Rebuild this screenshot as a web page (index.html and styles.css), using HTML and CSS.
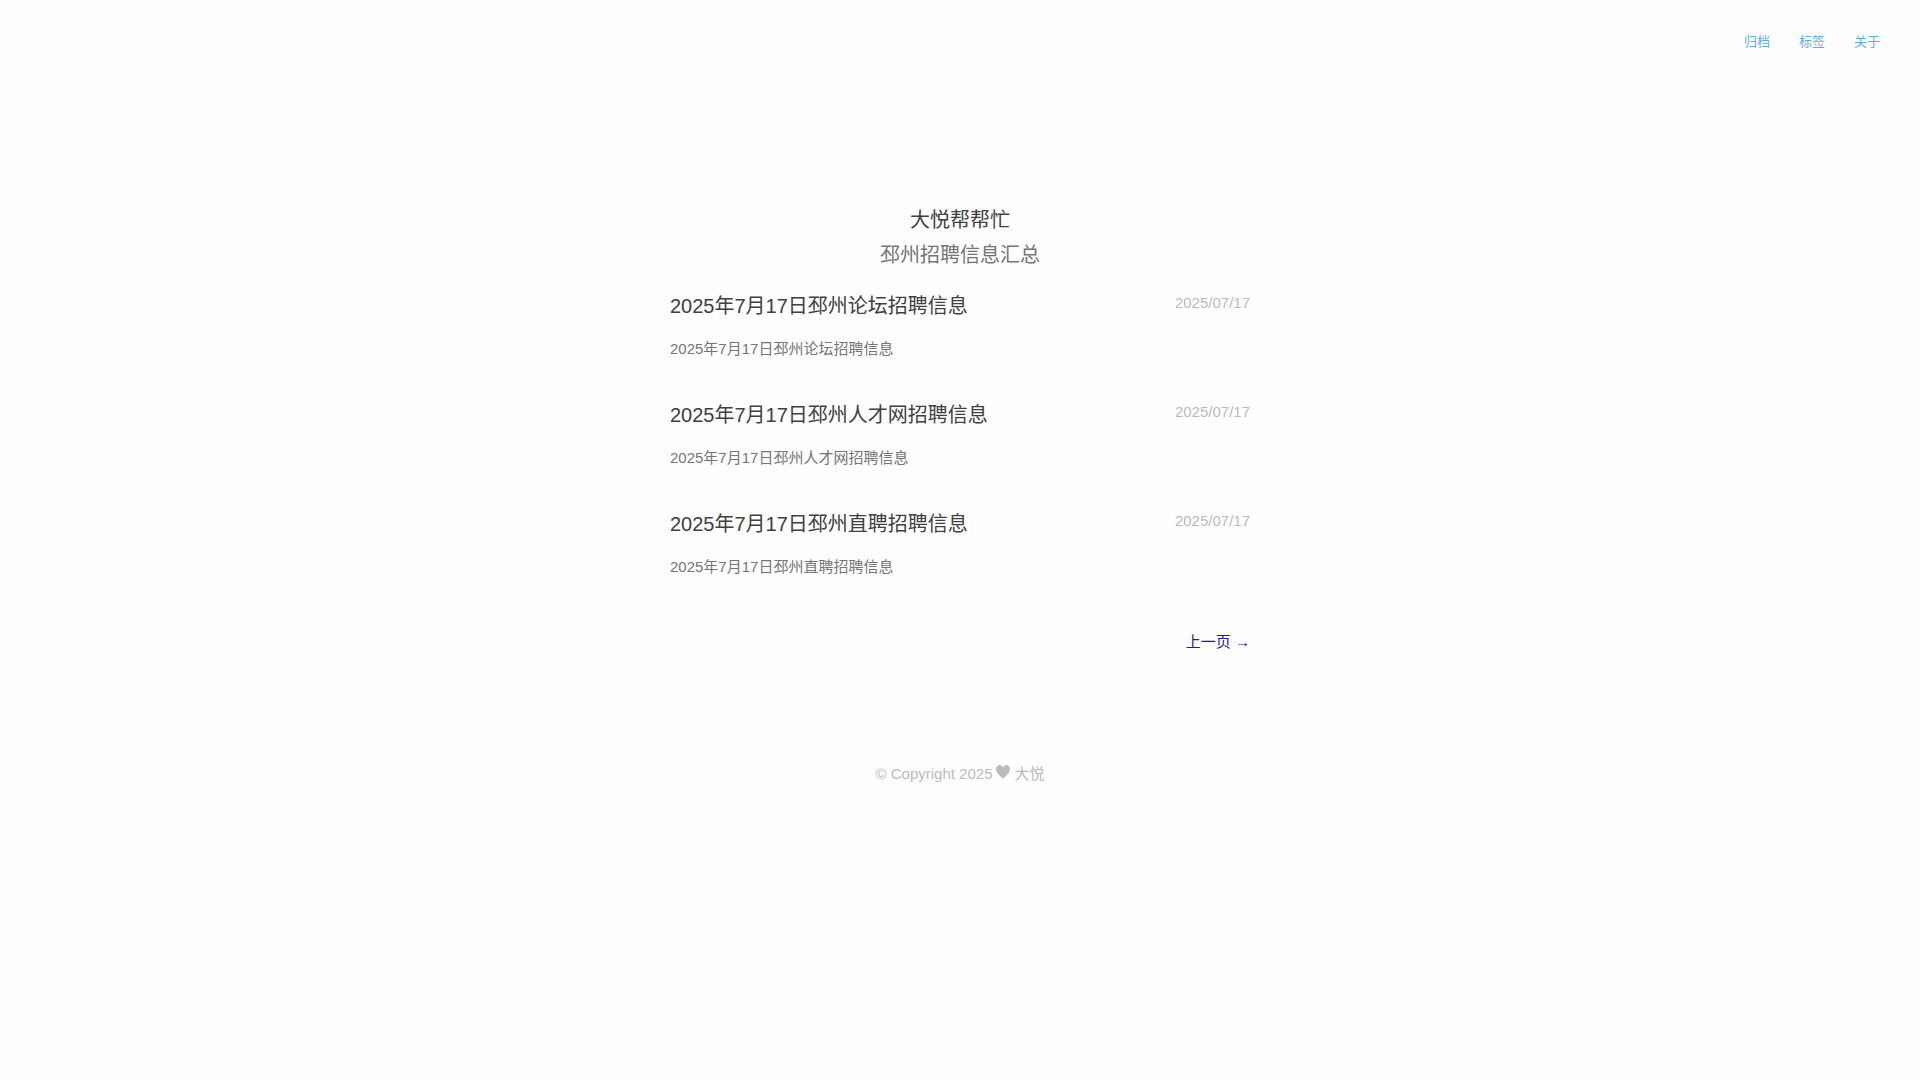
FILE: index.html
```html
<!DOCTYPE html>
<html lang="zh-CN">
<head>
<meta charset="utf-8">
<meta name="viewport" content="width=device-width, initial-scale=1">
<title>大悦帮帮忙</title>
<link rel="stylesheet" href="styles.css">
</head>
<body>
<nav class="site-nav">
  <a href="#archive">归档</a>
  <a href="#tags">标签</a>
  <a href="#about">关于</a>
</nav>
<header class="site-header">
  <h1 class="site-title">大悦帮帮忙</h1>
  <p class="site-subtitle">邳州招聘信息汇总</p>
</header>
<main class="content">
  <article class="post">
    <div class="post-head">
      <h2 class="post-title"><a href="#post-1">2025年7月17日邳州论坛招聘信息</a></h2>
      <time class="post-date" datetime="2025-07-17">2025/07/17</time>
    </div>
    <p class="post-summary">2025年7月17日邳州论坛招聘信息</p>
  </article>
  <article class="post">
    <div class="post-head">
      <h2 class="post-title"><a href="#post-2">2025年7月17日邳州人才网招聘信息</a></h2>
      <time class="post-date" datetime="2025-07-17">2025/07/17</time>
    </div>
    <p class="post-summary">2025年7月17日邳州人才网招聘信息</p>
  </article>
  <article class="post">
    <div class="post-head">
      <h2 class="post-title"><a href="#post-3">2025年7月17日邳州直聘招聘信息</a></h2>
      <time class="post-date" datetime="2025-07-17">2025/07/17</time>
    </div>
    <p class="post-summary">2025年7月17日邳州直聘招聘信息</p>
  </article>
  <div class="pager"><a href="#page-2">上一页 →</a></div>
</main>
<footer class="site-footer">
  <span>© Copyright 2025</span>
  <svg class="heart" viewBox="0 0 16 16" aria-hidden="true"><path d="M8 15C6.500 12.500 1 9.500 1 5.200C1 2.800 2.700 1 4.700 1C6.200 1 7.400 1.900 8 3.400C8.600 1.900 9.800 1 11.300 1C13.300 1 15 2.800 15 5.200C15 9.500 9.500 12.500 8 15Z"/></svg>
  <span>大悦</span>
</footer>
</body>
</html>
```
FILE: styles.css
```css
* { box-sizing: border-box; }
body {
  margin: 0;
  background: #fefefe;
  color: #404040;
  font-family: "Liberation Sans", "Noto Sans CJK SC", sans-serif;
  font-size: 15px;
  line-height: 24px;
}
h1, h2, p { margin: 0; font-weight: 400; }
a { text-decoration: none; }
.site-nav {
  display: flex;
  justify-content: flex-end;
  gap: 29px;
  padding: 30px 40px;
  font-size: 13px;
}
.site-nav a { color: #5badf0; }
.site-header {
  padding-top: 119px;
  text-align: center;
  font-size: 20px;
  line-height: 35px;
}
.site-title { font-size: 20px; }
.site-subtitle { color: #757575; }
.content {
  width: 100%;
  max-width: 580px;
  margin: 0 auto;
  padding-top: 15px;
}
.post { padding-bottom: 36px; }
.post-head {
  display: flex;
  justify-content: space-between;
  padding-bottom: 12px;
}
.post-title { font-size: 20px; line-height: 37px; }
.post-title a { color: #404040; }
.post-date { color: #bbb; line-height: 30px; }
.post-summary { color: #757575; }
.pager { padding-top: 15px; text-align: right; }
.pager a { color: #2912a8; }
.site-footer {
  display: flex;
  justify-content: center;
  gap: 3px;
  padding-top: 108px;
  color: #bbb;
}
.heart { width: 16px; height: 16px; margin-top: 2px; fill: currentColor; }
```
